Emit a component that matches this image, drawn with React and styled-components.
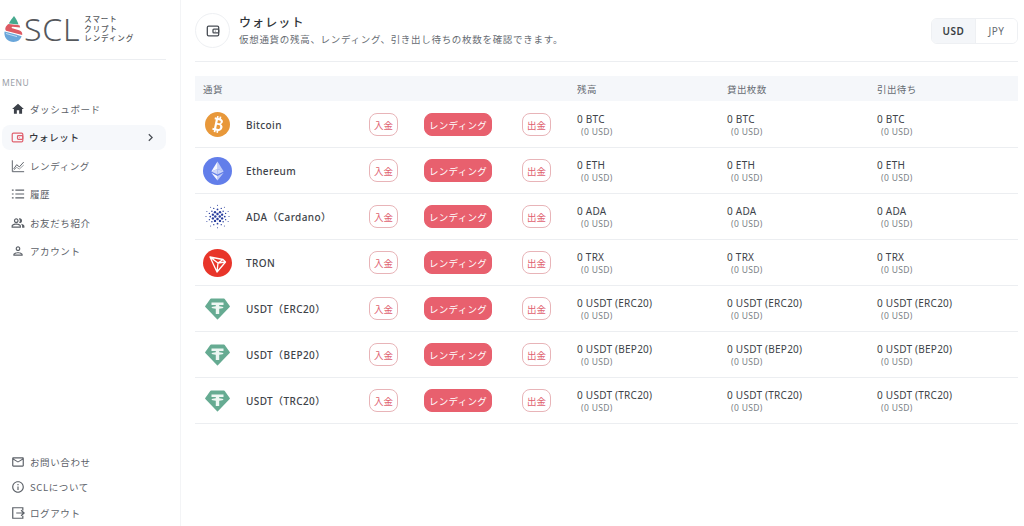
import React from 'react'
import styled, { createGlobalStyle } from 'styled-components'
import { MdHome, MdOutlinePeopleAlt, MdOutlinePerson, MdMailOutline, MdInfoOutline, MdChevronRight } from 'react-icons/md'

const GlobalStyle = createGlobalStyle`
  html, body { margin: 0; padding: 0; background: #fff; }
  body {
    font-family: "Noto Sans CJK JP", "Noto Sans", sans-serif;
    color: #3c4149;
  }
  * { box-sizing: border-box; }
`

const Page = styled.div`
  display: flex;
  width: 1024px;
  height: 526px;
  overflow: hidden;
`

const Sidebar = styled.aside`
  width: 181px;
  height: 526px;
  flex: none;
  border-right: 1px solid #f3f4f6;
  display: flex;
  flex-direction: column;
  padding-right: 14px;
  padding-bottom: 1px;
`

const LogoRow = styled.div`
  height: 60px;
  border-bottom: 1px solid #eceef1;
  display: flex;
  align-items: center;
  padding: 0 0 2px 4px;
`

const LogoWord = styled.span`
  font-family: "Noto Sans", sans-serif;
  font-size: 32px;
  font-weight: 300;
  line-height: 1;
  color: #55585c;
  letter-spacing: 0.8px;
  margin-left: 1px;
`

const LogoTag = styled.span`
  font-size: 7.5px;
  font-weight: 500;
  line-height: 9.5px;
  letter-spacing: 0.9px;
  color: #55585c;
  margin-left: 4px;
  white-space: pre-line;
`

const MenuLabel = styled.div`
  font-family: "Noto Sans", sans-serif;
  font-size: 8.5px;
  letter-spacing: 0.5px;
  color: #9aa0a8;
  margin: 17px 0 7.5px 2px;
  line-height: 12px;
`

const NavList = styled.nav`
  display: flex;
  flex-direction: column;
  gap: 3.4px;
`

const NavItem = styled.div`
  height: 25px;
  margin-left: 2px;
  padding: 0 8px 0 9px;
  display: flex;
  align-items: center;
  border-radius: 8px;
  font-size: 9.5px;
  letter-spacing: 0.6px;
  font-weight: ${p => (p.$active ? 500 : 400)};
  color: ${p => (p.$active ? '#33373d' : '#5c6168')};
  background: ${p => (p.$active ? '#f6f8fb' : 'transparent')};
  svg.lead { margin-right: 5px; flex: none; }
`

const Chevron = styled(MdChevronRight)`
  margin-left: auto;
  color: #4a4f56;
`

const FootList = styled.div`
  margin-top: auto;
  display: flex;
  flex-direction: column;
  gap: 0.5px;
`

const Main = styled.main`
  flex: 1;
  padding: 0 6px 0 14px;
`

const Header = styled.header`
  height: 62px;
  border-bottom: 1px solid #eceef1;
  display: flex;
  align-items: flex-start;
  padding-top: 13px;
`

const HeadIcon = styled.div`
  width: 35px;
  height: 35px;
  border-radius: 50%;
  border: 1px solid #eef0f3;
  display: flex;
  align-items: center;
  justify-content: center;
  color: #4a4f56;
  flex: none;
`

const HeadText = styled.div`
  margin-left: 9px;
  margin-top: 1px;
`

const Title = styled.h1`
  margin: 0;
  font-size: 12px;
  font-weight: 500;
  line-height: 16px;
  letter-spacing: 1.1px;
  color: #2f3338;
`

const Sub = styled.p`
  margin: 2px 0 0;
  font-size: 9.5px;
  line-height: 14px;
  letter-spacing: 0.7px;
  color: #666b72;
`

const Toggle = styled.div`
  margin-left: auto;
  margin-top: 5px;
  width: 87px;
  height: 26px;
  display: flex;
  border: 1px solid #eef0f3;
  border-radius: 6px;
  overflow: hidden;
`

const ToggleBtn = styled.div`
  flex: ${p => (p.$on ? '0 0 44px' : 1)};
  display: flex;
  align-items: center;
  justify-content: center;
  font-family: "Noto Sans", sans-serif;
  font-size: 10px;
  letter-spacing: 0.5px;
  font-weight: ${p => (p.$on ? 600 : 400)};
  color: ${p => (p.$on ? '#3a3e44' : '#666b72')};
  background: ${p => (p.$on ? '#f4f6f9' : '#fff')};
  border-right: ${p => (p.$on ? '1px solid #eef0f3' : 'none')};
`

const Table = styled.div`
  margin-top: 14px;
`

const columns = '43px 123px 55px 98px 55px 150px 150px 1fr'

const HeadRow = styled.div`
  display: grid;
  grid-template-columns: 166px 208px 150px 150px 1fr;
  height: 25px;
  margin-bottom: 1px;
  align-items: center;
  background: #f5f7fa;
  padding-left: 8px;
  font-size: 9.5px;
  letter-spacing: 0.4px;
  color: #676c73;
`

const Row = styled.div`
  display: grid;
  grid-template-columns: ${columns};
  height: 46.07px;
  align-items: center;
  padding-left: 8px;
  border-bottom: 1px solid #eceef1;
`

const CoinIcon = styled.div`
  width: 29px;
  height: 29px;
  display: flex;
  align-items: center;
  justify-content: center;
`

const CoinName = styled.div`
  font-family: "Noto Sans", "Noto Sans CJK JP", sans-serif;
  font-size: 10px;
  font-weight: 500;
  letter-spacing: 0.4px;
  color: #3e4349;
`

const ActionBtn = styled.div`
  height: 23px;
  width: ${p => (p.$fill ? '68px' : '29px')};
  border-radius: 8px;
  border: 1px solid ${p => (p.$fill ? '#e8606e' : '#e8b4b8')};
  background: ${p => (p.$fill ? '#e8606e' : '#fff')};
  color: ${p => (p.$fill ? '#fff' : '#e0616f')};
  font-size: 9.5px;
  font-weight: 400;
  letter-spacing: ${p => (p.$fill ? '0.3px' : '0')};
  display: flex;
  align-items: center;
  justify-content: center;
  white-space: nowrap;
`

const Amount = styled.div`
  display: flex;
  flex-direction: column;
  font-family: "Noto Sans", sans-serif;
  padding-top: 1px;
`

const Qty = styled.span`
  font-size: 10px;
  line-height: 13px;
  letter-spacing: 0.25px;
  color: #3e4349;
`

const Fiat = styled.span`
  font-size: 8.5px;
  line-height: 12px;
  letter-spacing: 0.35px;
  color: #7a7f86;
  padding-left: 4px;
`

const WalletIcon = ({ size = 13, color = 'currentColor', className }) => (
  <svg className={className} width={size} height={size} viewBox="0 0 16 16" fill="none" stroke={color} strokeWidth="1.5">
    <rect x="1.5" y="2.5" width="13" height="11" rx="1.5" />
    <rect x="8" y="5.8" width="6.5" height="4.4" rx="1" />
    <circle cx="10.6" cy="8" r="0.6" fill={color} stroke="none" />
  </svg>
)

const ChartIcon = () => (
  <svg className="lead" width="14" height="14" viewBox="0 0 16 16" fill="none" stroke="#5c6168" strokeWidth="1.1">
    <path d="M1.5 1.5V14.5H15" />
    <path d="M3 11.5L6.5 6.5L9.5 9L14.5 3.5" />
    <path d="M3 13L6.5 9.5L9.5 11.5L14.5 7" strokeWidth="0.7" />
  </svg>
)

const ListIcon = () => (
  <svg className="lead" width="14" height="14" viewBox="0 0 16 16" fill="none" stroke="#5c6168" strokeWidth="1.3">
    <path d="M5 3.5H15M5 8H15M5 12.5H15" />
    <path d="M1 3.5H3M1 8H3M1 12.5H3" />
  </svg>
)

const LogoutIcon = () => (
  <svg className="lead" width="14" height="14" viewBox="0 0 16 16" fill="none" stroke="#5c6168" strokeWidth="1.4">
    <path d="M13.5 5V2H2V14H13.5V11" />
    <path d="M6 8H15M11.5 4.8L15 8L11.5 11.2" />
  </svg>
)

const Logo = () => (
  <svg width="19" height="26" viewBox="0 0 19 26">
    <path d="M10 0C8 2.5 6 5 4.8 7.5L14.5 8.5C13.5 5.5 12 2.5 10 0Z" fill="#45a98e" />
    <path d="M4.5 8L15.5 9.3L16.2 11.6L8.5 10.8C7.5 10.8 7.3 12 8.3 12.3L15 14.2C17.5 15 18.6 16.8 18.2 19L2 14.8C.5 13 1.5 10 4.5 8Z" fill="#dd5a63" />
    <path d="M.6 15.4L12 18.6L17.6 20.3C16.5 23.8 13.5 26 9.5 26C3.5 26 -.5 21 .6 15.4Z" fill="#6aa6da" />
    <path d="M2 17.5L13 20.6" stroke="#fff" strokeWidth=".6" fill="none" />
  </svg>
)

const Bitcoin = () => (
  <svg width="25" height="25" viewBox="0 0 25 25">
    <circle cx="12.5" cy="12.5" r="12.5" fill="#e8983a" />
    <g transform="rotate(12 12.5 12.5)">
      <path d="M8.5 6H10.3V4.2H12V6H13V4.2H14.7V6.1C16.3 6.5 17.2 7.6 17.2 9C17.2 10.1 16.6 11 15.7 11.5C17.1 11.9 18 13 18 14.5C18 16.6 16.6 18.3 14.7 18.7V20.6H13V18.8H12V20.6H10.3V18.8H8.5V16.8H9.8V8H8.5ZM12 8.1V11H13.8C14.6 11 15.1 10.4 15.1 9.5C15.1 8.7 14.6 8.1 13.8 8.1ZM12 12.8V16.7H14C15 16.7 15.7 15.9 15.7 14.8C15.7 13.7 15 12.8 14 12.8Z" fill="#fff" fillRule="evenodd" />
    </g>
  </svg>
)

const Ethereum = () => (
  <svg width="29" height="28" viewBox="0 0 29 28">
    <ellipse cx="14.5" cy="14" rx="14.5" ry="14" fill="#627eea" />
    <path d="M14.5 4.5V12L8.3 14.6Z" fill="#fff" fillOpacity=".95" />
    <path d="M14.5 4.5V12L20.7 14.6Z" fill="#fff" fillOpacity=".6" />
    <path d="M14.5 12V17.6L8.3 14.6Z" fill="#fff" fillOpacity=".7" />
    <path d="M14.5 12V17.6L20.7 14.6Z" fill="#c9d3f8" />
    <path d="M8.3 15.8L14.5 23.5V19Z" fill="#fff" fillOpacity=".95" />
    <path d="M20.7 15.8L14.5 23.5V19Z" fill="#fff" fillOpacity=".6" />
  </svg>
)

const cardanoDots = [
  [10, 1, 0.45], [4.5, 2.5, 0.4], [15.5, 2.5, 0.4], [1.5, 6, 0.4], [18.5, 6, 0.4], [1.5, 14, 0.4], [18.5, 14, 0.4], [4.5, 17.5, 0.4], [15.5, 17.5, 0.4], [10, 19, 0.45], [0.8, 10, 0.45], [19.2, 10, 0.45],
  [7, 3.5, 0.55], [13, 3.5, 0.55], [3.5, 7.5, 0.55], [16.5, 7.5, 0.55], [3.5, 12.5, 0.55], [16.5, 12.5, 0.55], [7, 16.5, 0.55], [13, 16.5, 0.55],
  [10, 4.3, 0.7], [5.5, 5.8, 0.6], [14.5, 5.8, 0.6], [4.2, 10, 0.7], [15.8, 10, 0.7], [5.5, 14.2, 0.6], [14.5, 14.2, 0.6], [10, 15.7, 0.7],
  [8, 6.5, 0.95], [12, 6.5, 0.95], [6.3, 8.5, 0.95], [13.7, 8.5, 0.95], [6.3, 11.5, 0.95], [13.7, 11.5, 0.95], [8, 13.5, 0.95], [12, 13.5, 0.95],
  [10, 8, 1], [8.2, 10, 1], [11.8, 10, 1], [10, 12, 1],
]

const Cardano = () => (
  <svg width="25" height="25" viewBox="0 0 20 20">
    {cardanoDots.map(([x, y, r]) => (
      <circle key={`${x}-${y}`} cx={x} cy={y} r={r} fill="#2a3f9e" />
    ))}
  </svg>
)

const Tron = () => (
  <svg width="29" height="28" viewBox="0 0 29 28">
    <ellipse cx="14.5" cy="14" rx="14.5" ry="14" fill="#e8352a" />
    <path d="M7 8L20 10.5L22.5 13L14 23ZM7 8L14 23L15 14ZM7 8L15 14L20 10.5M15 14L22.5 13" fill="none" stroke="#fff" strokeWidth="1.3" strokeLinejoin="round" />
  </svg>
)

const Tether = () => (
  <svg width="25" height="22" viewBox="0 0 25 22">
    <path d="M6 1.5H19L24 8.5L12.5 20.5L1 8.5Z" fill="#66ab92" strokeLinejoin="round" stroke="#66ab92" strokeWidth="1.8" />
    <path d="M6.5 4.5H18.5V7H14.2V8.2C16.6 8.4 18.4 8.9 18.4 9.5C18.4 10.1 16.6 10.6 14.2 10.8V16H10.8V10.8C8.4 10.6 6.6 10.1 6.6 9.5C6.6 8.9 8.4 8.4 10.8 8.2V7H6.5Z" fill="#eef7f3" />
  </svg>
)

const coins = [
  { name: 'Bitcoin', unit: 'BTC', Icon: Bitcoin },
  { name: 'Ethereum', unit: 'ETH', Icon: Ethereum },
  { name: 'ADA（Cardano）', unit: 'ADA', Icon: Cardano },
  { name: 'TRON', unit: 'TRX', Icon: Tron },
  { name: 'USDT（ERC20）', unit: 'USDT (ERC20)', Icon: Tether },
  { name: 'USDT（BEP20）', unit: 'USDT (BEP20)', Icon: Tether },
  { name: 'USDT（TRC20）', unit: 'USDT (TRC20)', Icon: Tether },
]

const AmountCell = ({ unit }) => (
  <Amount>
    <Qty>0 {unit}</Qty>
    <Fiat>(0 USD)</Fiat>
  </Amount>
)

export default function App() {
  return (
    <Page>
      <GlobalStyle />
      <Sidebar>
        <LogoRow>
          <Logo />
          <LogoWord>SCL</LogoWord>
          <LogoTag>{'スマート\nクリプト\nレンディング'}</LogoTag>
        </LogoRow>
        <MenuLabel>MENU</MenuLabel>
        <NavList>
          <NavItem><MdHome className="lead" size={14} color="#3c4149" />ダッシュボード</NavItem>
          <NavItem $active><WalletIcon className="lead" color="#e0616f" />ウォレット<Chevron size={15} /></NavItem>
          <NavItem><ChartIcon />レンディング</NavItem>
          <NavItem><ListIcon />履歴</NavItem>
          <NavItem><MdOutlinePeopleAlt className="lead" size={14} />お友だち紹介</NavItem>
          <NavItem><MdOutlinePerson className="lead" size={14} />アカウント</NavItem>
        </NavList>
        <FootList>
          <NavItem><MdMailOutline className="lead" size={14} />お問い合わせ</NavItem>
          <NavItem><MdInfoOutline className="lead" size={14} />SCLについて</NavItem>
          <NavItem><LogoutIcon />ログアウト</NavItem>
        </FootList>
      </Sidebar>
      <Main>
        <Header>
          <HeadIcon><WalletIcon size={14} /></HeadIcon>
          <HeadText>
            <Title>ウォレット</Title>
            <Sub>仮想通貨の残高、レンディング、引き出し待ちの枚数を確認できます。</Sub>
          </HeadText>
          <Toggle>
            <ToggleBtn $on>USD</ToggleBtn>
            <ToggleBtn>JPY</ToggleBtn>
          </Toggle>
        </Header>
        <Table>
          <HeadRow>
            <span>通貨</span>
            <span />
            <span>残高</span>
            <span>貸出枚数</span>
            <span>引出待ち</span>
          </HeadRow>
          {coins.map(({ name, unit, Icon }) => (
            <Row key={name}>
              <CoinIcon><Icon /></CoinIcon>
              <CoinName>{name}</CoinName>
              <ActionBtn>入金</ActionBtn>
              <ActionBtn $fill>レンディング</ActionBtn>
              <ActionBtn>出金</ActionBtn>
              <AmountCell unit={unit} />
              <AmountCell unit={unit} />
              <AmountCell unit={unit} />
            </Row>
          ))}
        </Table>
      </Main>
    </Page>
  )
}
